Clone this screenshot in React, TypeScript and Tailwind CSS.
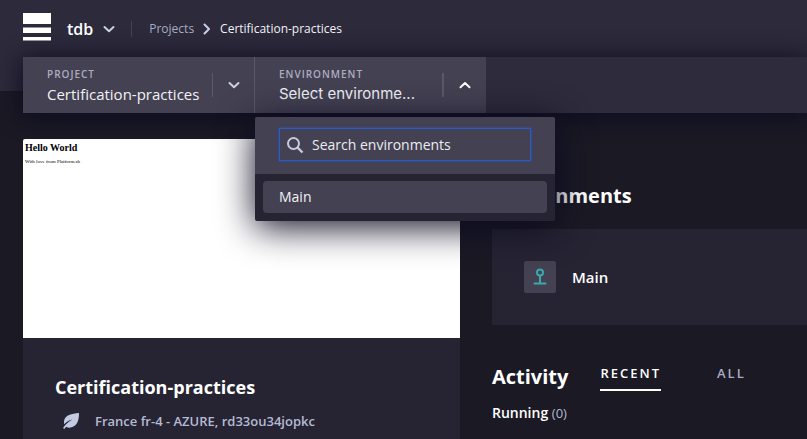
import { useState } from 'react';

const environments = [{ id: 'main', name: 'Main' }];

function Chevron({ direction = 'down', className = '' }: { direction?: 'down' | 'up' | 'right'; className?: string }) {
  const paths = {
    down: 'M1.5 4 6 8.200l4.500-4.200',
    up: 'M1.500 8.200 6 4l4.500 4.200',
    right: 'M3.500 1.500 8 6l-4.500 4.500',
  };
  return (
    <svg viewBox="0 0 12 12" className={`h-3 w-3 shrink-0 ${className}`} fill="none" stroke="currentColor" strokeWidth="2" aria-hidden="true">
      <path d={paths[direction]} strokeLinecap="round" strokeLinejoin="round" />
    </svg>
  );
}

function Logo() {
  return (
    <svg viewBox="0 0 28 28" className="h-7 w-7" fill="#fff" role="img" aria-label="Home">
      <rect width="28" height="11" />
      <rect y="14.500" width="28" height="5.500" />
      <rect y="24" width="28" height="3.500" />
    </svg>
  );
}

function Header() {
  return (
    <div className="flex h-[57px] items-center pl-[23px]">
      <a href="#home" className="-mt-1">
        <Logo />
      </a>
      <button type="button" className="ml-4 flex items-center gap-2.5 text-base font-semibold text-white">
        tdb
        <Chevron className="text-[#c9d0e4]" />
      </button>
      <div className="ml-4 h-4 w-px bg-[#434152]" />
      <nav aria-label="Breadcrumb" className="ml-[17px] flex items-center gap-[7px] text-xs">
        <a href="#projects" className="text-[#a9abc4]">Projects</a>
        <Chevron direction="right" className="text-[#c9d0e4]" />
        <a href="#project" className="text-[#f1f1f6]">Certification-practices</a>
      </nav>
    </div>
  );
}

function Menu() {
  return (
    <div className="absolute top-[60px] left-0 w-[300px] overflow-hidden rounded-xs bg-[#262433] shadow-[0_6px_36px_#0c0a1f]">
      <div className="bg-[#434152] px-6 pt-[11px] pb-[13px]">
        <label className="flex h-[33px] items-center gap-2 border border-[#2a5bcb] pl-1.5 shadow-[0_0_2px_#2a5bcb]">
          <svg viewBox="0 0 18 18" className="h-[18px] w-[18px] shrink-0" fill="none" stroke="#c3cbe3" strokeWidth="2" aria-hidden="true">
            <circle cx="7.500" cy="7.500" r="5.500" />
            <path d="m11.500 11.500 5 5" strokeWidth="2.400" />
          </svg>
          <input
            aria-label="Search environments"
            placeholder="Search environments"
            className="w-full min-w-0 bg-transparent text-sm text-white outline-none placeholder:text-[#ececf3]"
          />
        </label>
      </div>
      <ul className="px-2 pt-[7px] pb-2">
        {environments.map((env) => (
          <li key={env.id}>
            <button type="button" className="h-8 w-full rounded-sm bg-[#434152] px-4 text-left text-sm text-[#f1f1f6]">
              {env.name}
            </button>
          </li>
        ))}
      </ul>
    </div>
  );
}

function SelectorBar() {
  const [open, setOpen] = useState(true);
  return (
    <div className="ml-[23px] flex h-14 bg-[#2d2b3c] shadow-[0_2px_24px_#0c0a1f]">
      <button type="button" className="flex w-[232px] items-center border-r border-[#5a586b] bg-[#434152] pl-6 text-left">
        <span className="min-w-0 flex-1 pt-0.5">
          <span className="block text-[10px] leading-4 font-semibold tracking-widest text-[#adadc0]">PROJECT</span>
          <span className="block truncate text-[15px] leading-6 text-[#f1f1f6]">Certification-practices</span>
        </span>
        <span className="ml-3 flex h-6 w-[42px] items-center justify-center border-l border-[#5a586b]">
          <Chevron className="text-[#c9d0e4]" />
        </span>
      </button>
      <div className="relative w-[231px]">
        <button
          type="button"
          aria-expanded={open}
          onClick={() => setOpen(!open)}
          className="flex h-full w-full items-center bg-[#434152] pl-6 text-left"
        >
          <span className="min-w-0 flex-1 pt-0.5">
            <span className="block text-[10px] leading-4 font-semibold tracking-widest text-[#adadc0]">ENVIRONMENT</span>
            <span className="block font-[Inter,sans-serif] text-[15px] leading-6 whitespace-nowrap text-[#f1f1f6]">Select environme...</span>
          </span>
          <span className="ml-6 flex h-6 w-11 items-center justify-center border-l-2 border-[#5a586b]">
            <Chevron direction="up" className="text-white" />
          </span>
        </button>
        {open && <Menu />}
      </div>
    </div>
  );
}

function ProjectCard() {
  return (
    <section className="w-[437px] shrink-0 bg-[#262433]">
      <div className="h-[199px] rounded-t-xs bg-white px-0.5 pt-[3px] font-['Liberation_Serif',serif] text-black">
        <p className="text-[10px] leading-3 font-bold">Hello World</p>
        <p className="mt-1 text-[5px] leading-2">With love from Platform.sh</p>
      </div>
      <div className="px-8 pt-[35px] pb-8">
        <h2 className="text-lg leading-7 font-bold text-white">Certification-practices</h2>
        <p className="mt-2 flex items-center gap-4 pl-2 text-[13px] leading-6 font-semibold text-[#b5bad3]">
          <svg viewBox="0 0 16 16" className="h-4 w-4" fill="#c3cbe3" aria-hidden="true">
            <path d="M16 0C9 .5 1.500 2 1 8.500c-.1 1.200 0 2 .3 2.800C3 9 5.500 7.500 9.500 6.500 6 8.500 2.500 11 0 15l1.300 1 1.900-2.300C5 15 8 15 10.500 13.500 15 11 16 6 16 0Z" />
          </svg>
          France fr-4 - AZURE, rd33ou34jopkc
        </p>
      </div>
    </section>
  );
}

function Environments() {
  return (
    <section>
      <h2 className="text-xl leading-8 font-bold text-white">Environments</h2>
      <a href="#main" className="mt-[17px] flex h-24 items-center gap-4 bg-[#262433] px-8 text-[15px] font-semibold text-white">
        <span className="flex h-8 w-8 items-center justify-center rounded-xs bg-[#434152]">
          <svg viewBox="0 0 16 18" className="h-[18px] w-4" fill="none" stroke="#3ba9a9" strokeWidth="2" strokeLinecap="round" aria-hidden="true">
            <circle cx="8" cy="4.500" r="3" />
            <path d="M8 8v7M2.500 15.500h11" />
          </svg>
        </span>
        Main
      </a>
    </section>
  );
}

function Activity() {
  return (
    <section className="mt-9">
      <div className="flex items-start">
        <h2 className="text-xl leading-8 font-bold text-white">Activity</h2>
        <div role="tablist" className="ml-8 flex gap-14 text-[13px] tracking-[2px]">
          <button type="button" role="tab" aria-selected="true" className="h-[30px] border-b-2 border-white pb-0.5 font-semibold text-white">
            RECENT
          </button>
          <button type="button" role="tab" aria-selected="false" className="h-[30px] border-b-2 border-transparent pb-0.5 font-semibold text-[#a9abc4]">
            ALL
          </button>
        </div>
      </div>
      <p className="mt-2 text-sm leading-6 font-semibold text-white">
        Running <span className="text-[13px] font-normal text-[#b5bad3]">(0)</span>
      </p>
    </section>
  );
}

export default function App() {
  return (
    <div className="h-screen overflow-hidden bg-[#1a1924] font-['Open_Sans',sans-serif]">
      <header className="relative z-10 h-[91px] bg-[#2c2a3b]">
        <Header />
        <SelectorBar />
      </header>
      <main className="flex gap-8 pt-12 pl-[23px]">
        <ProjectCard />
        <div className="min-w-0 flex-1 pt-[41px]">
          <Environments />
          <Activity />
        </div>
      </main>
    </div>
  );
}
